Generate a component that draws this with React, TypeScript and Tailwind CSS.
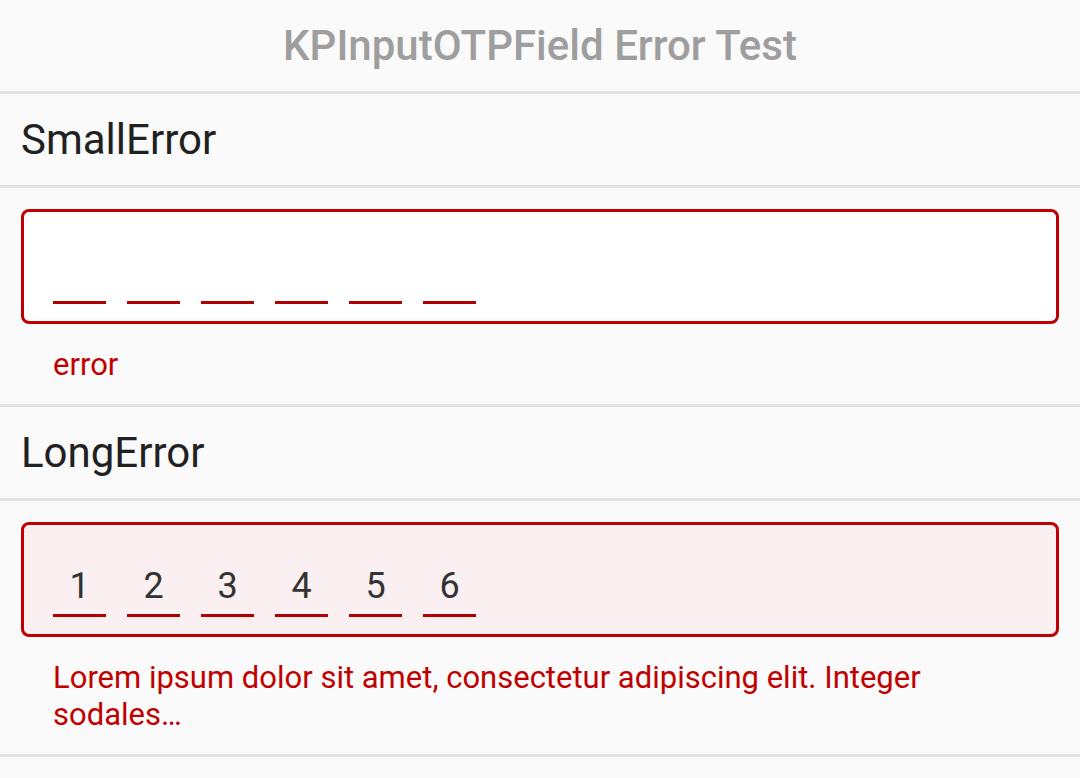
import React from 'react';

const DIGITS = 6;

const Divider: React.FC = () => <div className="h-[3px] bg-[#e3e3e3]" />;

const RowLabel: React.FC<{ label: string }> = ({ label }) => (
  <div className="h-[91px] flex items-center pl-[21px] text-[42px] leading-[49px] text-[#212121]">
    {label}
  </div>
);

const OTPField: React.FC<{ value: string; filled?: boolean }> = ({ value, filled }) => (
  <div
    className={`h-[115px] rounded-[8px] border-[3px] border-[#c00000] flex items-end gap-[21px] pl-[29px] pb-[17px] ${
      filled ? 'bg-[#fbf0f1]' : 'bg-white'
    }`}
  >
    {Array.from({ length: DIGITS }).map((_, i) => (
      <div key={i} className="flex flex-col items-center w-[53px]">
        <span className="text-[36px] leading-[42px] mb-[7px] text-[#333333]">
          {value[i] ?? '\u00a0'}
        </span>
        <div className="h-[3px] w-[53px] bg-[#b00000]" />
      </div>
    ))}
  </div>
);

const ErrorSection: React.FC<{ value: string; error: string; filled?: boolean }> = ({
  value,
  error,
  filled,
}) => (
  <div className="px-[21px] pt-[21px] pb-[21px]">
    <OTPField value={value} filled={filled} />
    <p className="mt-[22px] pl-[32px] pr-[32px] text-[31px] leading-[37px] text-[#c00000]">
      {error}
    </p>
  </div>
);

export default function App() {
  return (
    <div
      className="min-h-[778px] bg-[#fafafa]"
      style={{ fontFamily: 'Roboto, "Noto Sans", sans-serif' }}
    >
      <header className="h-[91px] flex items-center justify-center">
        <h1 className="text-[42px] leading-[49px] font-medium text-[#9e9e9e]">
          KPInputOTPField Error Test
        </h1>
      </header>
      <Divider />
      <RowLabel label="SmallError" />
      <Divider />
      <ErrorSection value="" error="error" />
      <Divider />
      <RowLabel label="LongError" />
      <Divider />
      <ErrorSection
        value="123456"
        filled
        error="Lorem ipsum dolor sit amet, consectetur adipiscing elit. Integer sodales…"
      />
      <Divider />
    </div>
  );
}
